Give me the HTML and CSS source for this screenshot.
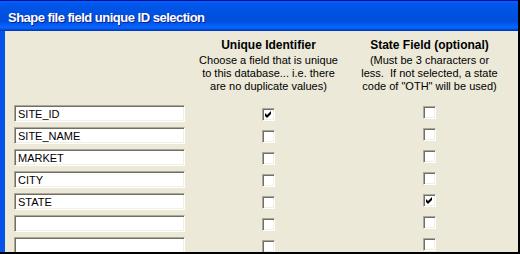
FILE: index.html
```html
<!DOCTYPE html>
<html lang="en">
<head>
    <meta charset="UTF-8">
    <title>Shape file field unique ID selection</title>
    <link rel="stylesheet" href="styles.css">
</head>
<body>
    <div class="window">
        <div class="title-bar">Shape file field unique ID selection</div>
        <div class="client">
            <div class="grid">
                <div class="spacer"></div>
                <div class="col-head">
                    <div class="head">Unique Identifier</div>
                    <div class="desc">Choose a field that is unique<br>to this database... i.e. there<br>are no duplicate values)</div>
                </div>
                <div class="col-head">
                    <div class="head">State Field (optional)</div>
                    <div class="desc">(Must be 3 characters or<br>less.&nbsp; If not selected, a state<br>code of "OTH" will be used)</div>
                </div>

                <div class="field">SITE_ID</div>
                <div class="cell"><span class="check"><svg viewBox="0 0 9 9"><path d="M1 3 L3 5 L7 1 L7 4 L3 8 L1 6 Z"/></svg></span></div>
                <div class="cell state"><span class="check"></span></div>

                <div class="field">SITE_NAME</div>
                <div class="cell"><span class="check"></span></div>
                <div class="cell state"><span class="check"></span></div>

                <div class="field">MARKET</div>
                <div class="cell"><span class="check"></span></div>
                <div class="cell state"><span class="check"></span></div>

                <div class="field">CITY</div>
                <div class="cell"><span class="check"></span></div>
                <div class="cell state"><span class="check"></span></div>

                <div class="field">STATE</div>
                <div class="cell"><span class="check"></span></div>
                <div class="cell state"><span class="check"><svg viewBox="0 0 9 9"><path d="M1 3 L3 5 L7 1 L7 4 L3 8 L1 6 Z"/></svg></span></div>

                <div class="field"></div>
                <div class="cell"><span class="check"></span></div>
                <div class="cell state"><span class="check"></span></div>

                <div class="field"></div>
                <div class="cell"><span class="check"></span></div>
                <div class="cell state"><span class="check"></span></div>
            </div>
        </div>
    </div>
</body>
</html>
```

FILE: styles.css
```css
html, body {
    margin: 0;
    padding: 0;
    width: 520px;
    height: 254px;
    overflow: hidden;
    background: #000;
}
.window {
    width: 518px;
    height: 252px;
    display: flex;
    flex-direction: column;
    font-family: "Liberation Sans", Arial, sans-serif;
    font-size: 11px;
    color: #000;
    overflow: hidden;
}
.title-bar {
    flex-shrink: 0;
    height: 31px;
    box-sizing: border-box;
    padding: 10px 0 0 8px;
    color: #fff;
    font-weight: bold;
    font-size: 13px;
    letter-spacing: -0.5px;
    line-height: 14px;
    text-shadow: 1px 1px #0a1e90;
    border-top: 1px solid #00138c;
    background: linear-gradient(to bottom, #0a5fff 0px, #0158ee 3px, #0052e2 10px, #004fdc 20px, #0460fa 25px, #0566ff 27px, #0042c8 29px, #0033aa 30px);
}
.client {
    flex: 1;
    min-height: 0;
    overflow: hidden;
    background: #ece9d8;
    border-left: 5px solid #0553e8;
    position: relative;
}
.client::before {
    content: "";
    position: absolute;
    left: -5px;
    top: 0;
    bottom: 0;
    width: 2px;
    background: #0a27b8;
}
.grid {
    display: grid;
    grid-template-columns: 171px 167px 155px;
    grid-auto-rows: 22px;
    padding: 8px 0 0 9px;
}
.spacer,
.col-head {
    grid-row: span 3;
}
.col-head {
    text-align: center;
    line-height: 13px;
}
.head {
    font-weight: bold;
    font-size: 12px;
    margin-bottom: 2px;
}
.desc {
    white-space: nowrap;
}
.field {
    height: 17px;
    box-sizing: border-box;
    background: #fff;
    border: 1px solid;
    border-color: #aca899 #fff #fff #aca899;
    box-shadow: inset 1px 1px #716f64, inset -1px -1px #f1efe2;
    padding: 2px 0 0 3px;
    line-height: 12px;
    white-space: nowrap;
}
.cell {
    display: flex;
    justify-content: center;
    padding-top: 3px;
}
.cell.state {
    padding-top: 1px;
}
.check {
    width: 13px;
    height: 13px;
    box-sizing: border-box;
    background: #fff;
    border: 1px solid;
    border-color: #aca899 #fff #fff #aca899;
    box-shadow: inset 1px 1px #716f64, inset -1px -1px #f1efe2;
}
.check svg {
    display: block;
    width: 9px;
    height: 9px;
    margin: 1px 0 0 1px;
    fill: #000;
}
```
